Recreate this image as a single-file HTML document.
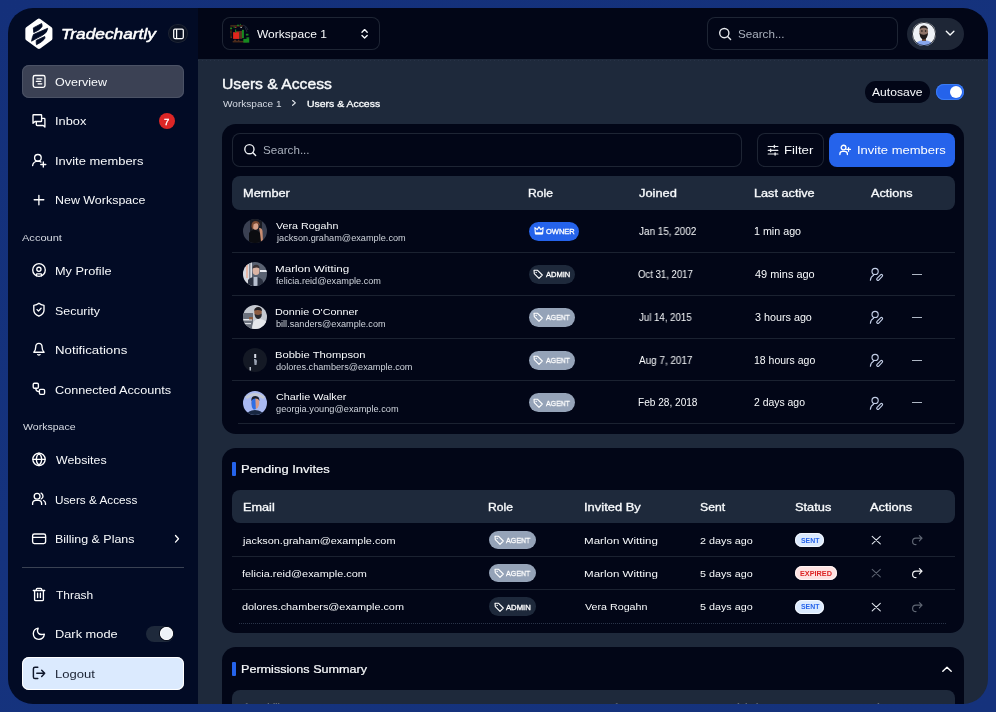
<!DOCTYPE html>
<html><head><meta charset="utf-8"><title>Users &amp; Access</title>
<style>
html,body{margin:0;padding:0;}
body{width:996px;height:712px;overflow:hidden;position:relative;background:linear-gradient(160deg,#14307a 0%,#15337e 50%,#15327c 100%);font-family:"Liberation Sans", sans-serif;}
#frame{position:absolute;left:0;top:0;width:996px;height:712px;clip-path:inset(8px 8px 8px 8px round 25px);}
.a{position:absolute;}
.t{position:absolute;white-space:pre;will-change:transform;transform-origin:0 0;}
</style></head><body><div id="frame">
<div class="a" style="left:8px;top:8px;width:190px;height:696px;background:#020b25;"></div>
<div class="a" style="left:198px;top:8px;width:790px;height:51px;background:#020617;"></div>
<div class="a" style="left:198px;top:59px;width:790px;height:645px;background:#1e293b;"></div>
<div class="a" style="left:198px;top:60px;width:790px;height:1px;background:repeating-linear-gradient(90deg,#2a3549 0 1.5px,transparent 1.5px 4px);opacity:0.8;"></div>
<svg class="a" style="left:20px;top:14px;" width="40" height="40" viewBox="0 0 712 712"><path d="M337 122 L537 270 L537 436 L337 582 L135 436 L135 270 Z" fill="#fff" stroke="#fff" stroke-width="80" stroke-linejoin="round"/><path d="M237 247 L385 169 Q398 200 392 223 Q370 280 244 331 Z" fill="#020b25" stroke="#020b25" stroke-width="14" stroke-linejoin="round"/><path d="M240 365 L493 254 Q490 330 400 380 Q300 430 206 484 Q215 420 240 365 Z" fill="#020b25" stroke="#020b25" stroke-width="14" stroke-linejoin="round"/><path d="M290 470 L440 400 Q448 420 440 436 Q400 500 293 547 Q285 500 290 470 Z" fill="#020b25" stroke="#020b25" stroke-width="14" stroke-linejoin="round"/></svg>
<div class="t" style="left:61.24px;top:26.87px;font-size:14.8px;line-height:14.8px;color:#fff;font-style:italic;-webkit-text-stroke:0.5px currentColor;transform:scaleX(1.1696);">Tradechartly</div>
<div class="a" style="left:168.2px;top:23.8px;width:19.600000000000023px;height:19.599999999999998px;background:#0a1122;border-radius:9.8px;box-shadow:inset 0 0 0 1px #1c2334;"></div>
<svg class="a" style="left:170px;top:26px;" width="16" height="16" viewBox="0 0 16 16"><rect x="3.7" y="3.1" width="9.6" height="9.4" rx="1.2" fill="none" stroke="#fff" stroke-width="1.25"/><line x1="6.6" y1="3.1" x2="6.6" y2="12.5" stroke="#fff" stroke-width="1.25"/></svg>
<div class="a" style="left:22px;top:65px;width:162px;height:33px;background:#3b4154;border-radius:7px;box-shadow:inset 0 0 0 1px #4b5265;"></div>
<svg class="a" style="left:28px;top:70px;" width="24" height="24" viewBox="0 0 24 24"><rect x="5.2" y="5.5" width="11.8" height="11.8" rx="1.8" fill="none" stroke="#fff" stroke-width="1.35" stroke-linecap="round" stroke-linejoin="round"/><path d="M9 8.9H13.8M8.4 11.4H12.8M10.1 13.8H13.8" fill="none" stroke="#fff" stroke-width="1.35" stroke-linecap="round" stroke-linejoin="round"/></svg>
<div class="t" style="left:55.41px;top:77.03px;font-size:10.6px;line-height:10.6px;color:#f8fafc;transform:scaleX(1.179);">Overview</div>
<svg class="a" style="left:28px;top:109px;" width="24" height="24" viewBox="0 0 24 24"><path d="M5 6.3Q5 5.7 5.6 5.7H13Q13.6 5.7 13.6 6.3V11.9Q13.6 12.5 13 12.5H7L5 14.2Z" fill="none" stroke="#fff" stroke-width="1.35" stroke-linecap="round" stroke-linejoin="round"/><path d="M8.3 12.8V15.6Q8.3 16.5 9.2 16.5H15.2L16.9 18V10.2Q16.9 9.4 16.1 9.4H13.6" fill="none" stroke="#fff" stroke-width="1.35" stroke-linecap="round" stroke-linejoin="round"/></svg>
<div class="t" style="left:54.82px;top:116.33px;font-size:10.6px;line-height:10.6px;color:#f8fafc;transform:scaleX(1.2082);">Inbox</div>
<div class="a" style="left:159.2px;top:113.2px;width:15.5px;height:15.499999999999986px;background:#dc2626;border-radius:8px;"></div>
<div class="t" style="left:164.40px;top:116.97px;font-size:9.6px;line-height:9.6px;color:#fff;-webkit-text-stroke:0.3px currentColor;">7</div>
<svg class="a" style="left:28px;top:148px;" width="24" height="24" viewBox="0 0 24 24"><circle cx="9.9" cy="9.8" r="3.3" fill="none" stroke="#fff" stroke-width="1.35" stroke-linecap="round" stroke-linejoin="round"/><path d="M4.6 17.6Q5.2 13.3 9.9 13.1Q11.9 13.1 12.9 14" fill="none" stroke="#fff" stroke-width="1.35" stroke-linecap="round" stroke-linejoin="round"/><path d="M15.3 14V19M12.8 16.5H17.8" fill="none" stroke="#fff" stroke-width="1.35" stroke-linecap="round" stroke-linejoin="round"/></svg>
<div class="t" style="left:54.81px;top:155.73px;font-size:10.6px;line-height:10.6px;color:#f8fafc;transform:scaleX(1.2201);">Invite members</div>
<svg class="a" style="left:28px;top:188px;" width="24" height="24" viewBox="0 0 24 24"><path d="M10.9 7.3V16.7M6.2 11.7H15.8" fill="none" stroke="#fff" stroke-width="1.35" stroke-linecap="round" stroke-linejoin="round"/></svg>
<div class="t" style="left:54.98px;top:195.33px;font-size:10.6px;line-height:10.6px;color:#f8fafc;transform:scaleX(1.1747);">New Workspace</div>
<div class="t" style="left:22.18px;top:232.97px;font-size:9.6px;line-height:9.6px;color:#d7dbe3;transform:scaleX(1.1509);">Account</div>
<svg class="a" style="left:28px;top:259px;" width="24" height="24" viewBox="0 0 24 24"><circle cx="11" cy="11" r="6.3" fill="none" stroke="#fff" stroke-width="1.35" stroke-linecap="round" stroke-linejoin="round"/><circle cx="10.9" cy="10.3" r="2.1" fill="none" stroke="#fff" stroke-width="1.35" stroke-linecap="round" stroke-linejoin="round"/><path d="M8.4 16.8V15.3Q8.4 14.8 8.9 14.8H13Q13.5 14.8 13.5 15.3V16.8" fill="none" stroke="#fff" stroke-width="1.35" stroke-linecap="round" stroke-linejoin="round"/></svg>
<div class="t" style="left:54.95px;top:266.43px;font-size:10.6px;line-height:10.6px;color:#f8fafc;transform:scaleX(1.2021);">My Profile</div>
<svg class="a" style="left:28px;top:298px;" width="24" height="24" viewBox="0 0 24 24"><path d="M10.9 5.2Q8.8 7 5.8 7.4V12.2Q5.8 16 10.9 18.2Q16 16 16 12.2V7.4Q13 7 10.9 5.2Z" fill="none" stroke="#fff" stroke-width="1.35" stroke-linecap="round" stroke-linejoin="round"/><path d="M9.1 11.6L10.5 13.1L13.1 10.3" fill="none" stroke="#fff" stroke-width="1.35" stroke-linecap="round" stroke-linejoin="round"/></svg>
<div class="t" style="left:55.44px;top:305.93px;font-size:10.6px;line-height:10.6px;color:#f8fafc;transform:scaleX(1.1726);">Security</div>
<svg class="a" style="left:28px;top:338px;" width="24" height="24" viewBox="0 0 24 24"><path d="M5.8 14.2Q7.7 12.3 7.7 9.2Q7.7 5.3 10.9 5.3Q14.1 5.3 14.1 9.2Q14.1 12.3 16.1 14.2Z" fill="none" stroke="#fff" stroke-width="1.35" stroke-linecap="round" stroke-linejoin="round"/><path d="M9.7 16.6Q10.9 17.6 12.1 16.6" fill="none" stroke="#fff" stroke-width="1.35" stroke-linecap="round" stroke-linejoin="round"/></svg>
<div class="t" style="left:54.91px;top:345.03px;font-size:10.6px;line-height:10.6px;color:#f8fafc;transform:scaleX(1.2524);">Notifications</div>
<svg class="a" style="left:28px;top:377px;" width="24" height="24" viewBox="0 0 24 24"><rect x="5.2" y="6.2" width="5.2" height="5" rx="1.2" fill="none" stroke="#fff" stroke-width="1.35" stroke-linecap="round" stroke-linejoin="round"/><rect x="11.4" y="12.3" width="5.2" height="5" rx="1.2" fill="none" stroke="#fff" stroke-width="1.35" stroke-linecap="round" stroke-linejoin="round"/><path d="M7.8 11.3Q7.8 14.5 11.2 14.6" fill="none" stroke="#fff" stroke-width="1.35" stroke-linecap="round" stroke-linejoin="round"/></svg>
<div class="t" style="left:55.36px;top:384.63px;font-size:10.6px;line-height:10.6px;color:#f8fafc;transform:scaleX(1.1946);">Connected Accounts</div>
<div class="t" style="left:22.75px;top:421.87px;font-size:9.6px;line-height:9.6px;color:#d7dbe3;transform:scaleX(1.1005);">Workspace</div>
<svg class="a" style="left:28px;top:448px;" width="24" height="24" viewBox="0 0 24 24"><circle cx="11" cy="11.3" r="6.2" fill="none" stroke="#fff" stroke-width="1.35" stroke-linecap="round" stroke-linejoin="round"/><path d="M5 11.3H17M11 5.1Q8.2 8 8.2 11.3Q8.2 14.6 11 17.5M11 5.1Q13.8 8 13.8 11.3Q13.8 14.6 11 17.5" fill="none" stroke="#fff" stroke-width="1.35" stroke-linecap="round" stroke-linejoin="round"/></svg>
<div class="t" style="left:55.95px;top:455.03px;font-size:10.6px;line-height:10.6px;color:#f8fafc;transform:scaleX(1.1666);">Websites</div>
<svg class="a" style="left:28px;top:487px;" width="24" height="24" viewBox="0 0 24 24"><circle cx="9.1" cy="9.2" r="2.9" fill="none" stroke="#fff" stroke-width="1.35" stroke-linecap="round" stroke-linejoin="round"/><path d="M13.1 6.1Q15 7 15 9.2Q15 11.2 13.1 12" fill="none" stroke="#fff" stroke-width="1.35" stroke-linecap="round" stroke-linejoin="round"/><path d="M4.6 17.4V16.6Q4.6 13.4 7.8 13.4H10.4Q13.6 13.4 13.6 16.6V17.4M15.6 13.5Q17.5 14.3 17.5 16.6V17.4" fill="none" stroke="#fff" stroke-width="1.35" stroke-linecap="round" stroke-linejoin="round"/></svg>
<div class="t" style="left:55.09px;top:494.53px;font-size:10.6px;line-height:10.6px;color:#f8fafc;transform:scaleX(1.1098);">Users &amp; Access</div>
<svg class="a" style="left:28px;top:527px;" width="24" height="24" viewBox="0 0 24 24"><rect x="4.6" y="7" width="13" height="9.6" rx="1.8" fill="none" stroke="#fff" stroke-width="1.35" stroke-linecap="round" stroke-linejoin="round"/><path d="M4.6 10.3H17.6" fill="none" stroke="#fff" stroke-width="1.35" stroke-linecap="round" stroke-linejoin="round"/></svg>
<div class="t" style="left:54.98px;top:533.93px;font-size:10.6px;line-height:10.6px;color:#f8fafc;transform:scaleX(1.1735);">Billing &amp; Plans</div>
<svg class="a" style="left:172px;top:533px;" width="12" height="12" viewBox="0 0 12 12"><path d="M3.5 2.5L6.5 5.8L3.5 9.1" fill="none" stroke="#fff" stroke-width="1.3" stroke-linecap="round" stroke-linejoin="round"/></svg>
<div class="a" style="left:22px;top:567px;width:162px;height:1px;background:#3a4253;"></div>
<svg class="a" style="left:28px;top:583px;" width="24" height="24" viewBox="0 0 24 24"><path d="M5.3 7.5H16.7M8.3 7.4V6.4Q8.3 5.4 9.3 5.4H12.7Q13.7 5.4 13.7 6.4V7.4M6.6 7.6V16.4Q6.6 17.6 7.8 17.6H14.2Q15.4 17.6 15.4 16.4V7.6M9.6 10.2V14.6M12.4 10.2V14.6" fill="none" stroke="#fff" stroke-width="1.35" stroke-linecap="round" stroke-linejoin="round"/></svg>
<div class="t" style="left:55.73px;top:590.03px;font-size:10.6px;line-height:10.6px;color:#f8fafc;transform:scaleX(1.1292);">Thrash</div>
<svg class="a" style="left:28px;top:622px;" width="24" height="24" viewBox="0 0 24 24"><path d="M10.2 6.1Q8.6 8.8 10.4 11.2Q12.2 13.3 16.4 12.1Q15.6 17.2 10.8 17.4Q5.4 17.2 5.3 11.6Q5.6 6.8 10.2 6.1Z" fill="none" stroke="#fff" stroke-width="1.35" stroke-linecap="round" stroke-linejoin="round"/></svg>
<div class="t" style="left:54.95px;top:629.13px;font-size:10.6px;line-height:10.6px;color:#f8fafc;transform:scaleX(1.2086);">Dark mode</div>
<div class="a" style="left:146px;top:626px;width:28.19999999999999px;height:16px;background:#1e293b;border-radius:8px;"></div>
<div class="a" style="left:160px;top:627.4px;width:13px;height:13.0px;background:#eef2f7;border-radius:6.5px;box-shadow:0 0 0 1px #0a0f1c, inset 0 0 0 1px #ffffff;"></div>
<div class="a" style="left:22px;top:657px;width:162px;height:33px;background:#dbeafe;border-radius:7px;box-shadow:inset 0 0 0 1px #ffffff;"></div>
<svg class="a" style="left:28px;top:661px;" width="24" height="24" viewBox="0 0 24 24"><path d="M9.8 6.2H7Q5.4 6.2 5.4 7.8V15.9Q5.4 17.5 7 17.5H9.8" fill="none" stroke="#0f172a" stroke-width="1.45" stroke-linecap="round"/><path d="M8.8 12.3H16.7M13.7 9.2L16.7 12.3L13.7 15.4" fill="none" stroke="#0f172a" stroke-width="1.45" stroke-linecap="round" stroke-linejoin="round"/></svg>
<div class="t" style="left:54.93px;top:668.83px;font-size:10.6px;line-height:10.6px;color:#1a2233;transform:scaleX(1.2302);">Logout</div>
<div class="a" style="left:222px;top:17px;width:158px;height:33px;border-radius:8px;box-shadow:inset 0 0 0 1px #1e2534;"></div>
<svg class="a" style="left:226px;top:20px;" width="28" height="28" viewBox="0 0 28 28"><rect x="4.33" y="5.12" width="12.60" height="1.57" fill="#4a2a1a"/><rect x="4.13" y="6.69" width="1.77" height="11.42" fill="#2a1a10"/><rect x="6.69" y="20.87" width="14.57" height="1.57" fill="#4a2a1a"/><rect x="9.45" y="11.02" width="6.69" height="7.87" fill="#5a3220"/><rect x="7.09" y="12.20" width="5.91" height="6.69" fill="#e0261c"/><rect x="15.94" y="9.84" width="1.97" height="8.27" fill="#178a20"/><rect x="17.32" y="18.90" width="5.91" height="3.74" fill="#178a20"/><rect x="20.47" y="17.32" width="2.76" height="1.57" fill="#178a20"/><rect x="4.13" y="7.68" width="1.97" height="1.38" fill="#178a20"/><rect x="7.48" y="6.69" width="1.57" height="0.98" fill="#178a20"/><rect x="11.02" y="4.72" width="1.97" height="1.18" fill="#178a20"/><rect x="13.78" y="3.94" width="1.18" height="0.79" fill="#178a20"/><rect x="19.88" y="13.78" width="2.56" height="1.77" fill="#178a20"/><rect x="9.06" y="6.89" width="1.38" height="0.98" fill="#c43a2a"/><rect x="14.37" y="6.89" width="1.57" height="0.98" fill="#b8c8c0"/><rect x="9.06" y="9.45" width="1.10" height="3.15" fill="#178a20"/><rect x="4.33" y="11.42" width="1.18" height="1.18" fill="#5a3220"/><rect x="4.72" y="16.54" width="1.18" height="1.57" fill="#5a3220"/><rect x="7.87" y="19.69" width="2.36" height="1.18" fill="#5a3220"/><rect x="11.81" y="19.69" width="1.57" height="1.18" fill="#5a3220"/><path d="M17 5 Q21 6 22 10 M19 7 L21 12" stroke="#2a3040" stroke-width="0.8" fill="none"/></svg>
<div class="t" style="left:256.75px;top:28.96px;font-size:10.8px;line-height:10.8px;color:#f8fafc;transform:scaleX(1.1119);">Workspace 1</div>
<svg class="a" style="left:358px;top:28px;" width="14" height="13" viewBox="0 0 14 13"><path d="M4 4.2L6.6 1.6L9.2 4.2M4 7.4L6.6 10L9.2 7.4" fill="none" stroke="#f8fafc" stroke-width="1.35" stroke-linecap="round" stroke-linejoin="round"/></svg>
<div class="a" style="left:707px;top:17px;width:191px;height:33px;border-radius:8px;box-shadow:inset 0 0 0 1px #1e2534;"></div>
<svg class="a" style="left:717px;top:25.8px;" width="16" height="16" viewBox="0 0 16 16"><circle cx="7.3" cy="7.1" r="4.6" fill="none" stroke="#e5e7eb" stroke-width="1.4"/><path d="M10.6 10.4L13.6 13.4" stroke="#e5e7eb" stroke-width="1.4" stroke-linecap="round"/></svg>
<div class="t" style="left:738.27px;top:29.16px;font-size:10.8px;line-height:10.8px;color:#aab1bd;transform:scaleX(1.078);">Search...</div>
<div class="a" style="left:907px;top:17.5px;width:57px;height:32.5px;background:#1e2636;border-radius:16.5px;"></div>
<svg class="a" style="left:912.2px;top:21.8px;" width="24" height="24" viewBox="0 0 24 24"><defs><clipPath id="cav"><circle cx="12" cy="12" r="12"/></clipPath></defs><g clip-path="url(#cav)"><rect width="24" height="24" fill="#eef1f6"/><path d="M3 23Q5 18.5 12 18Q19 18.5 21 23V24H3Z" fill="#88a6ec"/><path d="M10 16H14V19H10Z" fill="#6b4a3a"/><ellipse cx="11.7" cy="9.8" rx="4.4" ry="6" fill="#8f7468"/><path d="M7.5 11Q8 17 11.7 17.5Q15.4 17 16 11Q14 13 11.7 12.8Q9.4 13 7.5 11Z" fill="#1e1a1a"/><path d="M7.4 7.5Q8 3.5 11.7 3.5Q15.4 3.5 16 7.5Q14 5.6 11.7 5.8Q9.4 5.6 7.4 7.5Z" fill="#2a2424"/><circle cx="9.9" cy="9" r="0.8" fill="#111"/><circle cx="13.6" cy="9" r="0.8" fill="#111"/></g><circle cx="12" cy="12" r="11.6" fill="none" stroke="#0b0f18" stroke-width="0.8"/></svg>
<svg class="a" style="left:943px;top:28px;" width="14" height="12" viewBox="0 0 14 12"><path d="M3.3 3.3L7.1 7.1L10.9 3.3" fill="none" stroke="#f8fafc" stroke-width="1.35" stroke-linecap="round" stroke-linejoin="round"/></svg>
<div class="t" style="left:222.10px;top:76.99px;font-size:14.6px;line-height:14.6px;color:#f8fafc;-webkit-text-stroke:0.4px currentColor;transform:scaleX(1.075);">Users &amp; Access</div>
<div class="t" style="left:223.06px;top:99.88px;font-size:9px;line-height:9px;color:#d5dae3;transform:scaleX(1.118);">Workspace 1</div>
<svg class="a" style="left:288px;top:99px;" width="10" height="10" viewBox="0 0 10 10"><path d="M4.6 1.5L7.4 3.9L4.6 6.3" fill="none" stroke="#e2e6ec" stroke-width="1.15" stroke-linecap="round" stroke-linejoin="round"/></svg>
<div class="t" style="left:306.57px;top:99.88px;font-size:9px;line-height:9px;color:#f8fafc;-webkit-text-stroke:0.3px currentColor;transform:scaleX(1.1603);">Users &amp; Access</div>
<div class="a" style="left:865px;top:81px;width:64.5px;height:21.5px;background:#020617;border-radius:10.75px;"></div>
<div class="t" style="left:871.88px;top:87.95px;font-size:10.1px;line-height:10.1px;color:#f8fafc;transform:scaleX(1.2012);">Autosave</div>
<div class="a" style="left:935.6px;top:83.8px;width:28.5px;height:16.299999999999997px;background:#2563eb;border-radius:8.15px;box-shadow:inset 0 0 0 1px #3b7cf6;"></div>
<div class="a" style="left:950px;top:85.75px;width:12.200000000000045px;height:12.200000000000003px;background:#fff;border-radius:6.1px;"></div>
<div class="a" style="left:222px;top:124px;width:742px;height:309.7px;background:#020617;border-radius:14px;"></div>
<div class="a" style="left:232px;top:133px;width:510px;height:34px;border-radius:8px;box-shadow:inset 0 0 0 1px #1e2534;"></div>
<svg class="a" style="left:241px;top:141.2px;" width="16" height="16" viewBox="0 0 16 16"><circle cx="8.4" cy="8.2" r="4.6" fill="none" stroke="#eef0f4" stroke-width="1.4"/><path d="M11.7 11.5L14.6 14.4" stroke="#eef0f4" stroke-width="1.4" stroke-linecap="round"/></svg>
<div class="t" style="left:263.37px;top:145.16px;font-size:10.8px;line-height:10.8px;color:#aab1bd;transform:scaleX(1.078);">Search...</div>
<div class="a" style="left:756.6px;top:133px;width:67.0px;height:34px;border-radius:8px;box-shadow:inset 0 0 0 1px #1e2534;"></div>
<svg class="a" style="left:765px;top:142px;" width="16" height="16" viewBox="0 0 16 16"><path d="M3.2 4.5H12.9M3.2 8.3H12.9M3.2 12H12.9" stroke="#e5e7eb" stroke-width="1.2" stroke-linecap="round"/><path d="M9.4 3.4V5.6M5.6 7.2V9.4M10.1 10.9V13.1" stroke="#e5e7eb" stroke-width="1.5" stroke-linecap="round"/></svg>
<div class="t" style="left:784.42px;top:145.97px;font-size:10.2px;line-height:10.2px;color:#f8fafc;transform:scaleX(1.2942);">Filter</div>
<div class="a" style="left:829.4px;top:133px;width:125.39999999999998px;height:34px;background:#2563eb;border-radius:8px;"></div>
<svg class="a" style="left:837px;top:142px;" width="16" height="16" viewBox="0 0 16 16"><circle cx="6.55" cy="5.6" r="2.35" fill="none" stroke="#fff" stroke-width="1.3"/><path d="M2.9 12.6V11.9Q2.9 9.3 5.6 9.3H7.6Q10.4 9.3 10.4 11.9V12.6" fill="none" stroke="#fff" stroke-width="1.3" stroke-linecap="round"/><path d="M11.6 5.5V9.3M9.7 7.4H13.5" stroke="#fff" stroke-width="1.2" stroke-linecap="round"/></svg>
<div class="t" style="left:856.60px;top:145.97px;font-size:10.2px;line-height:10.2px;color:#fff;transform:scaleX(1.2761);">Invite members</div>
<div class="a" style="left:232px;top:176px;width:723px;height:34px;background:#1e293b;border-radius:8px;"></div>
<div class="t" style="left:242.64px;top:188.67px;font-size:10.2px;line-height:10.2px;color:#f8fafc;-webkit-text-stroke:0.3px currentColor;transform:scaleX(1.2545);">Member</div>
<div class="t" style="left:528.28px;top:188.67px;font-size:10.2px;line-height:10.2px;color:#f8fafc;-webkit-text-stroke:0.3px currentColor;transform:scaleX(1.1922);">Role</div>
<div class="t" style="left:638.79px;top:188.67px;font-size:10.2px;line-height:10.2px;color:#f8fafc;-webkit-text-stroke:0.3px currentColor;transform:scaleX(1.2604);">Joined</div>
<div class="t" style="left:754.15px;top:188.67px;font-size:10.2px;line-height:10.2px;color:#f8fafc;-webkit-text-stroke:0.3px currentColor;transform:scaleX(1.2449);">Last active</div>
<div class="t" style="left:870.66px;top:188.67px;font-size:10.2px;line-height:10.2px;color:#f8fafc;-webkit-text-stroke:0.3px currentColor;transform:scaleX(1.245);">Actions</div>
<svg class="a" style="left:242.6px;top:219px;" width="24" height="24" viewBox="0 0 24 24"><defs><clipPath id="ca0"><circle cx="12" cy="12" r="12"/></clipPath></defs><g clip-path="url(#ca0)"><rect width="24" height="24" fill="#3a4052"/><rect x="7" y="0" width="12" height="24" fill="#1a1c24"/><path d="M6 24V14Q8 11 12 11Q16 12 18 16V24Z" fill="#0b0c10"/><ellipse cx="12.5" cy="7" rx="3" ry="3.8" fill="#d6a088"/><path d="M8.5 8Q8 2 13 2Q17 2.5 17 7L15.5 5Q13 3.5 10.5 5.5L10 11Z" fill="#7a4a32"/><path d="M16 9Q19 8.5 19.5 12L20 23H18L17 14Z" fill="#c98d72"/></g></svg>
<div class="t" style="left:276.25px;top:220.80px;font-size:9.8px;line-height:9.8px;color:#f8fafc;transform:scaleX(1.0898);">Vera Rogahn</div>
<div class="t" style="left:276.52px;top:233.70px;font-size:8.5px;line-height:8.5px;color:#cfd4dc;transform:scaleX(1.0805);">jackson.graham@example.com</div>
<div class="a" style="left:528.6px;top:221.5px;width:50.60000000000002px;height:19.0px;background:#2563eb;border-radius:9.5px;"></div>
<svg class="a" style="left:532.6px;top:225px;" width="12" height="12" viewBox="0 0 12 12"><path d="M1.9 2.6L4.2 4.6L6 1.9L7.8 4.6L10.1 2.6L9.6 8.6H2.4Z" fill="none" stroke="#fff" stroke-width="1.1" stroke-linejoin="round"/><path d="M2.4 7.2H9.6V9.6H2.4Z" fill="#fff"/></svg>
<div class="t" style="left:545.60px;top:228.31px;font-size:7.2px;line-height:7.2px;color:#fff;-webkit-text-stroke:0.3px currentColor;transform:scaleX(1.0409);">OWNER</div>
<div class="t" style="left:638.64px;top:226.75px;font-size:10.1px;line-height:10.1px;color:#f8fafc;transform:scaleX(0.9825);">Jan 15, 2002</div>
<div class="t" style="left:754.18px;top:226.75px;font-size:10.1px;line-height:10.1px;color:#f8fafc;transform:scaleX(1.0618);">1 min ago</div>
<div class="a" style="left:232px;top:252px;width:723px;height:1px;background:#1b2231;"></div>
<svg class="a" style="left:242.6px;top:262px;" width="24" height="24" viewBox="0 0 24 24"><defs><clipPath id="ca1"><circle cx="12" cy="12" r="12"/></clipPath></defs><g clip-path="url(#ca1)"><rect width="24" height="24" fill="#5a6272"/><rect x="0" y="0" width="9" height="24" fill="#d8dae2"/><rect x="3" y="2" width="2" height="14" fill="#e8b8a8"/><rect x="6" y="0" width="1.5" height="20" fill="#8a8e98"/><rect x="17" y="8" width="7" height="2" fill="#e8eaf0"/><path d="M5 24V18Q7 15 12 15Q18 15 20 19V24Z" fill="#2c3242"/><path d="M10.5 15H14.5V24H10.5Z" fill="#b8c0d0"/><ellipse cx="13" cy="8.5" rx="3.4" ry="4.6" fill="#dcb4a4"/><path d="M9.5 6.5Q10 2.5 13.5 2.8Q16.8 3 16.5 6.5Q14 5 11 6Z" fill="#3a3236"/></g></svg>
<div class="t" style="left:275.35px;top:263.80px;font-size:9.8px;line-height:9.8px;color:#f8fafc;transform:scaleX(1.1851);">Marlon Witting</div>
<div class="t" style="left:276.17px;top:276.70px;font-size:8.5px;line-height:8.5px;color:#cfd4dc;transform:scaleX(1.0768);">felicia.reid@example.com</div>
<div class="a" style="left:528.6px;top:264.5px;width:46.60000000000002px;height:19.0px;background:#1e293b;border-radius:9.5px;"></div>
<svg class="a" style="left:532.1px;top:268px;" width="12" height="12" viewBox="0 0 12 12"><path d="M2 2.3H5.6L10.3 7L7 10.3L2.3 5.6Z" fill="none" stroke="#fff" stroke-width="1.1" stroke-linejoin="round"/><circle cx="4.2" cy="4.4" r="0.7" fill="#fff"/></svg>
<div class="t" style="left:546.14px;top:271.31px;font-size:7.2px;line-height:7.2px;color:#fff;-webkit-text-stroke:0.3px currentColor;transform:scaleX(1.0494);">ADMIN</div>
<div class="t" style="left:638.35px;top:269.75px;font-size:10.1px;line-height:10.1px;color:#f8fafc;transform:scaleX(0.9485);">Oct 31, 2017</div>
<div class="t" style="left:754.75px;top:269.75px;font-size:10.1px;line-height:10.1px;color:#f8fafc;transform:scaleX(1.0857);">49 mins ago</div>
<svg class="a" style="left:868px;top:266px;" width="16" height="16" viewBox="0 0 16 16"><circle cx="7.1" cy="5.4" r="3.1" fill="none" stroke="#c3cee6" stroke-width="1.15"/><path d="M2.4 14.2Q2.6 10.6 5.6 9.2" fill="none" stroke="#c3cee6" stroke-width="1.15" stroke-linecap="round"/><line x1="9.9" y1="13.2" x2="13.4" y2="9.6" stroke="#c3cee6" stroke-width="3.5" stroke-linecap="round"/><line x1="9.9" y1="13.2" x2="13.4" y2="9.6" stroke="#020617" stroke-width="1.25" stroke-linecap="round"/></svg>
<div class="a" style="left:912.3px;top:273.9px;width:9.900000000000091px;height:1.2000000000000455px;background:#aeb6c4;"></div>
<div class="a" style="left:232px;top:295px;width:723px;height:1px;background:#1b2231;"></div>
<svg class="a" style="left:242.6px;top:305px;" width="24" height="24" viewBox="0 0 24 24"><defs><clipPath id="ca2"><circle cx="12" cy="12" r="12"/></clipPath></defs><g clip-path="url(#ca2)"><rect width="24" height="24" fill="#c4c8d0"/><rect x="0" y="8" width="10" height="16" fill="#6a707c"/><rect x="0" y="14" width="9" height="1.5" fill="#e8eaee"/><rect x="0" y="18" width="8" height="1.2" fill="#dcdfe4"/><path d="M9 24Q9 15 15 14Q22 14 24 18V24Z" fill="#e6e8ec"/><ellipse cx="15" cy="7" rx="3.8" ry="4.8" fill="#8c5c42"/><path d="M11.5 9Q12 14 15.5 14Q19 13 18.8 8.5Q16 11 11.5 9Z" fill="#2a2a30"/><path d="M11 5.5Q12 2 15.5 2Q19 2.5 19 6Q16 4.5 11 5.5Z" fill="#1e1e24"/><rect x="6" y="12" width="4" height="2.5" fill="#8a5a40"/></g></svg>
<div class="t" style="left:275.41px;top:306.80px;font-size:9.8px;line-height:9.8px;color:#f8fafc;transform:scaleX(1.1018);">Donnie O'Conner</div>
<div class="t" style="left:275.71px;top:319.70px;font-size:8.5px;line-height:8.5px;color:#cfd4dc;transform:scaleX(1.0726);">bill.sanders@example.com</div>
<div class="a" style="left:528.6px;top:307.5px;width:46.60000000000002px;height:19.0px;background:#95a3b8;border-radius:9.5px;"></div>
<svg class="a" style="left:532.1px;top:311px;" width="12" height="12" viewBox="0 0 12 12"><path d="M2 2.3H5.6L10.3 7L7 10.3L2.3 5.6Z" fill="none" stroke="#fff" stroke-width="1.1" stroke-linejoin="round"/><circle cx="4.2" cy="4.4" r="0.7" fill="#fff"/></svg>
<div class="t" style="left:546.13px;top:314.31px;font-size:7.2px;line-height:7.2px;color:#fff;-webkit-text-stroke:0.3px currentColor;transform:scaleX(0.9644);">AGENT</div>
<div class="t" style="left:638.65px;top:312.75px;font-size:10.1px;line-height:10.1px;color:#f8fafc;transform:scaleX(0.9556);">Jul 14, 2015</div>
<div class="t" style="left:754.59px;top:312.75px;font-size:10.1px;line-height:10.1px;color:#f8fafc;transform:scaleX(1.0663);">3 hours ago</div>
<svg class="a" style="left:868px;top:309px;" width="16" height="16" viewBox="0 0 16 16"><circle cx="7.1" cy="5.4" r="3.1" fill="none" stroke="#c3cee6" stroke-width="1.15"/><path d="M2.4 14.2Q2.6 10.6 5.6 9.2" fill="none" stroke="#c3cee6" stroke-width="1.15" stroke-linecap="round"/><line x1="9.9" y1="13.2" x2="13.4" y2="9.6" stroke="#c3cee6" stroke-width="3.5" stroke-linecap="round"/><line x1="9.9" y1="13.2" x2="13.4" y2="9.6" stroke="#020617" stroke-width="1.25" stroke-linecap="round"/></svg>
<div class="a" style="left:912.3px;top:316.9px;width:9.900000000000091px;height:1.2000000000000455px;background:#aeb6c4;"></div>
<div class="a" style="left:232px;top:338px;width:723px;height:1px;background:#1b2231;"></div>
<svg class="a" style="left:242.6px;top:348px;" width="24" height="24" viewBox="0 0 24 24"><defs><clipPath id="ca3"><circle cx="12" cy="12" r="12"/></clipPath></defs><g clip-path="url(#ca3)"><rect width="24" height="24" fill="#141925"/><rect x="11.2" y="6" width="2" height="4" fill="#d8dce6"/><path d="M11 11Q13.5 10.5 14 13L13.5 17H11.5Z" fill="#9aa2b2"/><rect x="6.5" y="19" width="1.5" height="3.5" fill="#b8beca"/></g></svg>
<div class="t" style="left:275.38px;top:349.80px;font-size:9.8px;line-height:9.8px;color:#f8fafc;transform:scaleX(1.1399);">Bobbie Thompson</div>
<div class="t" style="left:275.92px;top:362.70px;font-size:8.5px;line-height:8.5px;color:#cfd4dc;transform:scaleX(1.0768);">dolores.chambers@example.com</div>
<div class="a" style="left:528.6px;top:350.5px;width:46.60000000000002px;height:19.0px;background:#95a3b8;border-radius:9.5px;"></div>
<svg class="a" style="left:532.1px;top:354px;" width="12" height="12" viewBox="0 0 12 12"><path d="M2 2.3H5.6L10.3 7L7 10.3L2.3 5.6Z" fill="none" stroke="#fff" stroke-width="1.1" stroke-linejoin="round"/><circle cx="4.2" cy="4.4" r="0.7" fill="#fff"/></svg>
<div class="t" style="left:546.13px;top:357.31px;font-size:7.2px;line-height:7.2px;color:#fff;-webkit-text-stroke:0.3px currentColor;transform:scaleX(0.9644);">AGENT</div>
<div class="t" style="left:638.78px;top:355.75px;font-size:10.1px;line-height:10.1px;color:#f8fafc;transform:scaleX(0.9828);">Aug 7, 2017</div>
<div class="t" style="left:754.20px;top:355.75px;font-size:10.1px;line-height:10.1px;color:#f8fafc;transform:scaleX(1.0391);">18 hours ago</div>
<svg class="a" style="left:868px;top:352px;" width="16" height="16" viewBox="0 0 16 16"><circle cx="7.1" cy="5.4" r="3.1" fill="none" stroke="#c3cee6" stroke-width="1.15"/><path d="M2.4 14.2Q2.6 10.6 5.6 9.2" fill="none" stroke="#c3cee6" stroke-width="1.15" stroke-linecap="round"/><line x1="9.9" y1="13.2" x2="13.4" y2="9.6" stroke="#c3cee6" stroke-width="3.5" stroke-linecap="round"/><line x1="9.9" y1="13.2" x2="13.4" y2="9.6" stroke="#020617" stroke-width="1.25" stroke-linecap="round"/></svg>
<div class="a" style="left:912.3px;top:359.9px;width:9.900000000000091px;height:1.2000000000000455px;background:#aeb6c4;"></div>
<div class="a" style="left:232px;top:380px;width:723px;height:1px;background:#1b2231;"></div>
<svg class="a" style="left:242.6px;top:390.5px;" width="24" height="24" viewBox="0 0 24 24"><defs><clipPath id="ca4"><circle cx="12" cy="12" r="12"/></clipPath></defs><g clip-path="url(#ca4)"><rect width="24" height="24" fill="#a9b9f2"/><path d="M2 6Q12 -2 22 6L20 8Q12 2 4 8Z" fill="#c4cad6"/><path d="M3 24Q5 19.5 12 19Q19 19.5 21 24Z" fill="#182742"/><ellipse cx="12.3" cy="12" rx="3.9" ry="6" fill="#d99a84"/><path d="M8.4 12Q8.4 6 12.3 6L12.8 18Q11 19 10 18Q8.4 16 8.4 12Z" fill="#2f6ee6"/><path d="M8.3 10Q8 5 12.5 5Q16.5 5.2 16.5 10L15 8Q12 6.8 9.5 8.5Z" fill="#1a1e2a"/></g></svg>
<div class="t" style="left:275.75px;top:392.30px;font-size:9.8px;line-height:9.8px;color:#f8fafc;transform:scaleX(1.1007);">Charlie Walker</div>
<div class="t" style="left:275.91px;top:405.20px;font-size:8.5px;line-height:8.5px;color:#cfd4dc;transform:scaleX(1.0843);">georgia.young@example.com</div>
<div class="a" style="left:528.6px;top:393.0px;width:46.60000000000002px;height:19.0px;background:#95a3b8;border-radius:9.5px;"></div>
<svg class="a" style="left:532.1px;top:396.5px;" width="12" height="12" viewBox="0 0 12 12"><path d="M2 2.3H5.6L10.3 7L7 10.3L2.3 5.6Z" fill="none" stroke="#fff" stroke-width="1.1" stroke-linejoin="round"/><circle cx="4.2" cy="4.4" r="0.7" fill="#fff"/></svg>
<div class="t" style="left:546.13px;top:399.81px;font-size:7.2px;line-height:7.2px;color:#fff;-webkit-text-stroke:0.3px currentColor;transform:scaleX(0.9644);">AGENT</div>
<div class="t" style="left:637.97px;top:398.25px;font-size:10.1px;line-height:10.1px;color:#f8fafc;">Feb 28, 2018</div>
<div class="t" style="left:754.48px;top:398.25px;font-size:10.1px;line-height:10.1px;color:#f8fafc;transform:scaleX(1.0318);">2 days ago</div>
<svg class="a" style="left:868px;top:394.5px;" width="16" height="16" viewBox="0 0 16 16"><circle cx="7.1" cy="5.4" r="3.1" fill="none" stroke="#c3cee6" stroke-width="1.15"/><path d="M2.4 14.2Q2.6 10.6 5.6 9.2" fill="none" stroke="#c3cee6" stroke-width="1.15" stroke-linecap="round"/><line x1="9.9" y1="13.2" x2="13.4" y2="9.6" stroke="#c3cee6" stroke-width="3.5" stroke-linecap="round"/><line x1="9.9" y1="13.2" x2="13.4" y2="9.6" stroke="#020617" stroke-width="1.25" stroke-linecap="round"/></svg>
<div class="a" style="left:912.3px;top:401.9px;width:9.900000000000091px;height:1.2000000000000455px;background:#aeb6c4;"></div>
<div class="a" style="left:238px;top:423px;width:717px;height:1px;background:#1b2231;"></div>
<div class="a" style="left:222px;top:448px;width:742px;height:184.70000000000005px;background:#020617;border-radius:14px;"></div>
<div class="a" style="left:232px;top:462px;width:3.5px;height:14px;background:#2563eb;border-radius:1px;"></div>
<div class="t" style="left:240.76px;top:463.76px;font-size:10.8px;line-height:10.8px;color:#f8fafc;-webkit-text-stroke:0.2px currentColor;transform:scaleX(1.2013);">Pending Invites</div>
<div class="a" style="left:232px;top:490px;width:723px;height:33px;background:#1e293b;border-radius:8px;"></div>
<div class="t" style="left:242.95px;top:503.07px;font-size:10.2px;line-height:10.2px;color:#f8fafc;-webkit-text-stroke:0.3px currentColor;transform:scaleX(1.2446);">Email</div>
<div class="t" style="left:488.48px;top:503.07px;font-size:10.2px;line-height:10.2px;color:#f8fafc;-webkit-text-stroke:0.3px currentColor;transform:scaleX(1.1922);">Role</div>
<div class="t" style="left:583.69px;top:503.07px;font-size:10.2px;line-height:10.2px;color:#f8fafc;-webkit-text-stroke:0.3px currentColor;transform:scaleX(1.2702);">Invited By</div>
<div class="t" style="left:699.83px;top:503.07px;font-size:10.2px;line-height:10.2px;color:#f8fafc;-webkit-text-stroke:0.3px currentColor;transform:scaleX(1.1963);">Sent</div>
<div class="t" style="left:794.91px;top:503.07px;font-size:10.2px;line-height:10.2px;color:#f8fafc;-webkit-text-stroke:0.3px currentColor;transform:scaleX(1.2589);">Status</div>
<div class="t" style="left:870.46px;top:503.07px;font-size:10.2px;line-height:10.2px;color:#f8fafc;-webkit-text-stroke:0.3px currentColor;transform:scaleX(1.266);">Actions</div>
<div class="t" style="left:242.77px;top:535.82px;font-size:9.9px;line-height:9.9px;color:#f8fafc;transform:scaleX(1.101);">jackson.graham@example.com</div>
<div class="a" style="left:489.1px;top:530.65px;width:46.69999999999993px;height:18.700000000000045px;background:#95a3b8;border-radius:9.35px;"></div>
<svg class="a" style="left:492.6px;top:534px;" width="12" height="12" viewBox="0 0 12 12"><path d="M2 2.3H5.6L10.3 7L7 10.3L2.3 5.6Z" fill="none" stroke="#fff" stroke-width="1.1" stroke-linejoin="round"/><circle cx="4.2" cy="4.4" r="0.7" fill="#fff"/></svg>
<div class="t" style="left:506.43px;top:537.31px;font-size:7.2px;line-height:7.2px;color:#fff;-webkit-text-stroke:0.3px currentColor;transform:scaleX(0.9805);">AGENT</div>
<div class="t" style="left:583.75px;top:535.82px;font-size:9.9px;line-height:9.9px;color:#f8fafc;transform:scaleX(1.171);">Marlon Witting</div>
<div class="t" style="left:699.66px;top:535.82px;font-size:9.9px;line-height:9.9px;color:#f8fafc;transform:scaleX(1.0925);">2 days ago</div>
<div class="a" style="left:795.4px;top:533px;width:28.5px;height:14px;background:#dbeafe;border-radius:7px;box-shadow:inset 0 0 0 1px #f4f8ff;"></div>
<div class="t" style="left:800.60px;top:537.54px;font-size:6.8px;line-height:6.8px;color:#2563eb;font-weight:700;transform:scaleX(1.0128);">SENT</div>
<svg class="a" style="left:870.3px;top:534px;" width="12" height="12" viewBox="0 0 12 12"><path d="M2.2 2.3L10.3 9.8M10.3 2.3L2.2 9.8" stroke="#dfe4ec" stroke-width="1.1" stroke-linecap="round"/></svg>
<svg class="a" style="left:910px;top:533px;" width="14" height="14" viewBox="0 0 14 14"><path d="M12 5.2L9.4 2.6M12 5.2L9.4 7.8M12 5.2H6Q2.6 5.2 2.6 8.4Q2.6 11.6 6 11.6" fill="none" stroke="#5f6673" stroke-width="1.2" stroke-linecap="round" stroke-linejoin="round"/></svg>
<div class="a" style="left:232px;top:556px;width:723px;height:1px;background:#1b2231;"></div>
<div class="t" style="left:242.35px;top:568.82px;font-size:9.9px;line-height:9.9px;color:#f8fafc;transform:scaleX(1.1029);">felicia.reid@example.com</div>
<div class="a" style="left:489.1px;top:563.65px;width:46.69999999999993px;height:18.700000000000045px;background:#95a3b8;border-radius:9.35px;"></div>
<svg class="a" style="left:492.6px;top:567px;" width="12" height="12" viewBox="0 0 12 12"><path d="M2 2.3H5.6L10.3 7L7 10.3L2.3 5.6Z" fill="none" stroke="#fff" stroke-width="1.1" stroke-linejoin="round"/><circle cx="4.2" cy="4.4" r="0.7" fill="#fff"/></svg>
<div class="t" style="left:506.43px;top:570.31px;font-size:7.2px;line-height:7.2px;color:#fff;-webkit-text-stroke:0.3px currentColor;transform:scaleX(0.9805);">AGENT</div>
<div class="t" style="left:583.75px;top:568.82px;font-size:9.9px;line-height:9.9px;color:#f8fafc;transform:scaleX(1.171);">Marlon Witting</div>
<div class="t" style="left:699.77px;top:568.82px;font-size:9.9px;line-height:9.9px;color:#f8fafc;transform:scaleX(1.0902);">5 days ago</div>
<div class="a" style="left:795.4px;top:566px;width:41.5px;height:14px;background:#fee2e2;border-radius:7px;box-shadow:inset 0 0 0 1px #fff4f4;"></div>
<div class="t" style="left:800.31px;top:570.54px;font-size:6.8px;line-height:6.8px;color:#dc2626;font-weight:700;transform:scaleX(1.072);">EXPIRED</div>
<svg class="a" style="left:870.3px;top:567px;" width="12" height="12" viewBox="0 0 12 12"><path d="M2.2 2.3L10.3 9.8M10.3 2.3L2.2 9.8" stroke="#5b6270" stroke-width="1.1" stroke-linecap="round"/></svg>
<svg class="a" style="left:910px;top:566px;" width="14" height="14" viewBox="0 0 14 14"><path d="M12 5.2L9.4 2.6M12 5.2L9.4 7.8M12 5.2H6Q2.6 5.2 2.6 8.4Q2.6 11.6 6 11.6" fill="none" stroke="#f3f4f6" stroke-width="1.2" stroke-linecap="round" stroke-linejoin="round"/></svg>
<div class="a" style="left:232px;top:589px;width:723px;height:1px;background:#1b2231;"></div>
<div class="t" style="left:242.04px;top:602.32px;font-size:9.9px;line-height:9.9px;color:#f8fafc;transform:scaleX(1.1);">dolores.chambers@example.com</div>
<div class="a" style="left:489.1px;top:597.15px;width:46.69999999999993px;height:18.700000000000045px;background:#1e293b;border-radius:9.35px;"></div>
<svg class="a" style="left:492.6px;top:600.5px;" width="12" height="12" viewBox="0 0 12 12"><path d="M2 2.3H5.6L10.3 7L7 10.3L2.3 5.6Z" fill="none" stroke="#fff" stroke-width="1.1" stroke-linejoin="round"/><circle cx="4.2" cy="4.4" r="0.7" fill="#fff"/></svg>
<div class="t" style="left:506.45px;top:603.81px;font-size:7.2px;line-height:7.2px;color:#fff;-webkit-text-stroke:0.3px currentColor;transform:scaleX(1.0669);">ADMIN</div>
<div class="t" style="left:584.65px;top:602.32px;font-size:9.9px;line-height:9.9px;color:#f8fafc;transform:scaleX(1.083);">Vera Rogahn</div>
<div class="t" style="left:699.77px;top:602.32px;font-size:9.9px;line-height:9.9px;color:#f8fafc;transform:scaleX(1.0902);">5 days ago</div>
<div class="a" style="left:795.4px;top:599.5px;width:28.5px;height:14.0px;background:#dbeafe;border-radius:7px;box-shadow:inset 0 0 0 1px #f4f8ff;"></div>
<div class="t" style="left:800.60px;top:604.04px;font-size:6.8px;line-height:6.8px;color:#2563eb;font-weight:700;transform:scaleX(1.0128);">SENT</div>
<svg class="a" style="left:870.3px;top:600.5px;" width="12" height="12" viewBox="0 0 12 12"><path d="M2.2 2.3L10.3 9.8M10.3 2.3L2.2 9.8" stroke="#dfe4ec" stroke-width="1.1" stroke-linecap="round"/></svg>
<svg class="a" style="left:910px;top:599.5px;" width="14" height="14" viewBox="0 0 14 14"><path d="M12 5.2L9.4 2.6M12 5.2L9.4 7.8M12 5.2H6Q2.6 5.2 2.6 8.4Q2.6 11.6 6 11.6" fill="none" stroke="#5f6673" stroke-width="1.2" stroke-linecap="round" stroke-linejoin="round"/></svg>
<div class="a" style="left:238.7px;top:623px;width:708.3px;height:1px;background:repeating-linear-gradient(90deg,#2a3448 0 1px,transparent 1px 2px);"></div>
<div class="a" style="left:222px;top:647px;width:742px;height:113px;background:#020617;border-radius:14px;"></div>
<div class="a" style="left:232px;top:661.7px;width:3.5px;height:14.0px;background:#2563eb;border-radius:1px;"></div>
<div class="t" style="left:240.78px;top:663.96px;font-size:10.8px;line-height:10.8px;color:#f8fafc;-webkit-text-stroke:0.2px currentColor;transform:scaleX(1.1678);">Permissions Summary</div>
<svg class="a" style="left:940px;top:662px;" width="14" height="14" viewBox="0 0 14 14"><path d="M2.8 9.2L7 5.2L11.2 9.2" fill="none" stroke="#fff" stroke-width="1.4" stroke-linecap="round" stroke-linejoin="round"/></svg>
<div class="a" style="left:232px;top:690px;width:723px;height:50px;background:#1e293b;border-radius:8px;"></div>
<div class="t" style="left:243.00px;top:703.57px;font-size:10.2px;line-height:10.2px;color:#f8fafc;-webkit-text-stroke:0.3px currentColor;">Capability</div>
<div class="t" style="left:613.00px;top:703.57px;font-size:10.2px;line-height:10.2px;color:#f8fafc;-webkit-text-stroke:0.3px currentColor;">Owner</div>
<div class="t" style="left:735.00px;top:703.57px;font-size:10.2px;line-height:10.2px;color:#f8fafc;-webkit-text-stroke:0.3px currentColor;">Admin</div>
<div class="t" style="left:875.00px;top:703.57px;font-size:10.2px;line-height:10.2px;color:#f8fafc;-webkit-text-stroke:0.3px currentColor;">Agent</div>
</div></body></html>
